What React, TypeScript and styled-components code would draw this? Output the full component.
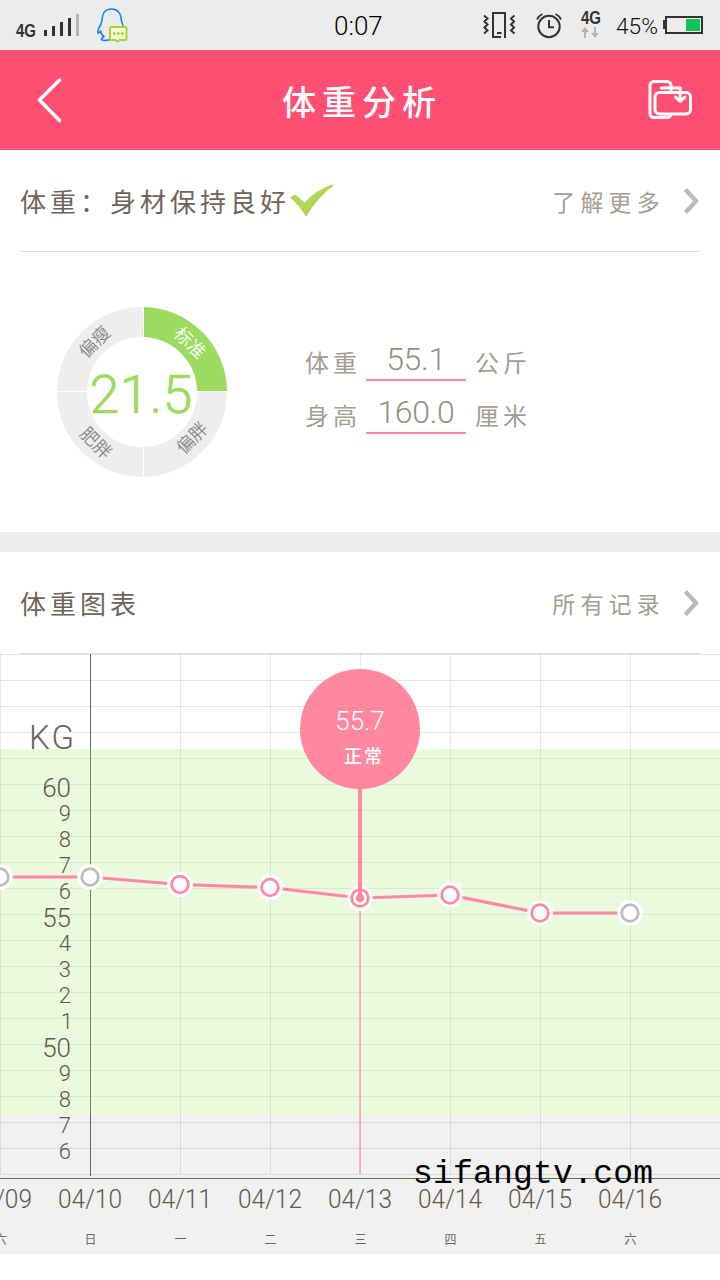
import React from 'react';
import styled, { createGlobalStyle } from 'styled-components';

const latin = `Roboto, "Liberation Sans", sans-serif`;
const cjk = `"Noto Sans CJK SC", sans-serif`;
const brown = '#6f6457';
const rose = '#ff879f';

const GlobalStyle = createGlobalStyle`
  * { box-sizing: border-box; }
  body { margin: 0; background: #fff; }
  svg { display: block; flex: none; }
`;

const Screen = styled.div`
  width: 720px;
  height: 1280px;
  overflow: hidden;
  display: flex;
  flex-direction: column;
  background: #fff;
  font-family: ${cjk};
`;

const StatusBar = styled.div`
  height: 50px;
  flex: none;
  display: grid;
  grid-template-columns: 334px 1fr 240px;
  background: #ececec;
`;

const Clock = styled.div`
  font: 300 26px/52px ${latin};
  color: #000;
`;

const Header = styled.header`
  height: 100px;
  flex: none;
  display: flex;
  align-items: center;
  padding: 0 27px 0 36px;
  background: #ff5073;
`;

const Title = styled.h1`
  flex: 1;
  margin: 0;
  padding: 2px 0 0 219px;
  font: 500 34px/50px ${cjk};
  letter-spacing: 6px;
  color: #fff;
`;

const SectionRow = styled.div`
  height: 102px;
  flex: none;
  margin: 0 20px;
  display: flex;
  align-items: center;
  border-bottom: 1px solid #dedede;
`;

const SectionTitle = styled.div`
  flex: 1;
  display: flex;
  align-items: center;
  font: 400 26px/40px ${cjk};
  letter-spacing: 4px;
  color: ${brown};
`;

const MoreLink = styled.div`
  display: flex;
  align-items: center;
  gap: 17px;
  font: 400 23px/40px ${cjk};
  letter-spacing: 5.200px;
  color: #a39d94;
`;

const Summary = styled.section`
  height: 280px;
  flex: none;
  display: flex;
  gap: 77px;
  padding: 55px 0 0 57px;
`;

const Fields = styled.div`
  padding-top: 21px;
`;

const Field = styled.div`
  height: 53px;
  display: grid;
  grid-template-columns: 62px 100px auto;
  align-items: end;
`;

const FieldText = styled.span<{ $unit?: boolean }>`
  padding: 0 0 3px ${(p) => (p.$unit ? 9 : 1)}px;
  font: 400 24px/32px ${cjk};
  letter-spacing: 4px;
  color: #a39d94;
`;

const FieldValue = styled.span`
  height: 45px;
  border-bottom: 2px solid ${rose};
  text-align: center;
  font: 300 32px/47px ${latin};
  letter-spacing: -0.3px;
  color: #968f85;
`;

const Divider = styled.div`
  height: 20px;
  flex: none;
  background: #eee;
`;

const StatusLeft = () => (
  <svg width="334" height="50" fill="none">
    <text x="16" y="37" textLength="20" lengthAdjust="spacingAndGlyphs" fontFamily="Liberation Sans" fontWeight="700" fontSize="18" fill="#333">4G</text>
    <path d="M45.5 30v6M53.5 26v10M61.5 22v14M69.5 18v18" stroke="#333" strokeWidth="3" />
    <path d="M77.5 14v22" stroke="#b5b5b5" strokeWidth="3" />
    <path d="M123 26.500C123 24 122 22.500 121.500 21C121 13 118 9 111.500 9C105 9 102 14 102 20C101.500 22 101.500 23.500 100.500 25C98 29 97.500 31 98 33C98.500 33.500 99.500 32.500 100.500 31C101 34 102.500 35.500 104 36.500C101.500 38 100.500 39.500 102.500 40C105 41 108 40.500 111 39" stroke="#1685fa" strokeWidth="1.6" strokeLinejoin="round" />
    <path d="M111.500 27h13.500a1.500 1.500 0 0 1 1.500 1.500v10a1.500 1.500 0 0 1-1.500 1.500h-5.500l-2 1.500-2-1.500h-4a1.500 1.500 0 0 1-1.500-1.500v-10a1.500 1.500 0 0 1 1.500-1.500z" fill="#f3f8e0" stroke="#a7d629" strokeWidth="2" />
    <path d="M113 33.500h2.500M117 33.500h2.500M121 33.500h2.500" stroke="#a7d629" strokeWidth="2.400" />
  </svg>
);

const StatusRight = () => (
  <svg width="240" height="50" viewBox="480 0 240 50" fill="none" stroke="#333" strokeWidth="2">
    <path d="M501 36.900H493V13H505V38M497 33h4.500" />
    <path d="M484 15.500l3.500 3-3 3 3 3-3 3 3 3-3.500 3M514.500 15.500l-3.500 3 3 3-3 3 3 3-3 3 3.500 3" strokeWidth="2" />
    <circle cx="549" cy="26.500" r="10.700" />
    <path d="M549 20v7.300h5" />
    <path d="M537 19.500q2-4 5.500-5.500M561 19.500q-2-4-5.500-5.500" strokeWidth="1.700" />
    <text x="581" y="24" textLength="20" lengthAdjust="spacingAndGlyphs" fontFamily="Liberation Sans" fontWeight="700" fontSize="18" fill="#333" stroke="none">4G</text>
    <path d="M585 38v-7M595 27v7" stroke="#b3b3b3" />
    <path d="M581 32l4-5 4 5zM591 33l4 5 4-5z" fill="#b3b3b3" stroke="none" />
    <text x="616" y="34" textLength="42" lengthAdjust="spacingAndGlyphs" fontFamily={latin} fontWeight="300" fontSize="22.500" fill="#111" stroke="none">45%</text>
    <rect x="666" y="17" width="36" height="16" />
    <path d="M664.500 20v9" strokeWidth="3" />
    <rect x="686" y="19" width="14" height="12" fill="#12c25b" stroke="none" />
  </svg>
);

const BackIcon = () => (
  <svg width="27" height="46" fill="none" stroke="#fff" strokeWidth="3.500" strokeLinecap="round" strokeLinejoin="round">
    <path d="M23.500 3L3.500 23L23.500 43.500" />
  </svg>
);

const FolderIcon = () => (
  <svg width="46" height="42" viewBox="647 79 46 42" fill="none" stroke="#fff" strokeWidth="3" strokeLinecap="round" strokeLinejoin="round">
    <path d="M671 91V85.500a4 4 0 0 0-4-4H654a4 4 0 0 0-4 4v28a4 4 0 0 0 4 4h13a4.500 4.500 0 0 0 4-3" />
    <rect x="655" y="92.500" width="35.500" height="21.500" rx="4.500" />
    <path d="M661.500 88h18.700v13M675.500 97l4.700 4.500 4.700-4.500" />
  </svg>
);

const Chevron = () => (
  <svg width="18" height="26" fill="none" stroke="#bdb9b9" strokeWidth="4.300">
    <path d="M3.500 1.500L14 13L3.500 24.500" strokeLinejoin="miter" />
  </svg>
);

const CheckMark = styled.svg`
  margin: -2px 0 0 -1px;
`;

const Check = () => (
  <CheckMark width="44" height="34">
    <path d="M1 14.500L6 11.500Q11 15 15.500 19.500Q27 7 44 1L43.500 3.500Q30 13 17.500 33L16.500 33Q10 22 1 14.500Z" fill="#aed855" />
  </CheckMark>
);

const segments = [
  { label: '偏瘦', x: 37.5, y: 35, angle: -45, fill: '#888' },
  { label: '标准', x: 133, y: 36, angle: 45, fill: '#fff' },
  { label: '肥胖', x: 39, y: 136, angle: 45, fill: '#888' },
  { label: '偏胖', x: 135, y: 131, angle: -45, fill: '#888' },
];

const Donut = () => (
  <svg width="170" height="170">
    <circle cx="85" cy="85" r="70" fill="none" stroke="#eee" strokeWidth="30" />
    <path d="M86 15A70 70 0 0 1 155 84.500" fill="none" stroke="#9bdc60" strokeWidth="30" />
    <path d="M86.500 0v32M86.500 138v32M0 84.500h32M138 84.500h32" stroke="#fff" />
    {segments.map((s) => (
      <text key={s.label} transform={`translate(${s.x} ${s.y}) rotate(${s.angle})`} y="6.500" textAnchor="middle" fontFamily="Noto Sans CJK SC" fontWeight="350" fontSize="18" fill={s.fill}>{s.label}</text>
    ))}
    <text x="84" y="106" textAnchor="middle" fontFamily={latin} fontWeight="300" fontSize="54" fill="#9bdc60" stroke="#9bdc60" strokeWidth="0.700">21.5</text>
  </svg>
);

const gridRows = Array.from({ length: 21 }, (_, i) => i * 26 + 0.5);
const gridCols = [0, 180, 270, 360, 450, 540, 630];
const scale = ['60', '9', '8', '7', '6', '55', '4', '3', '2', '1', '50', '9', '8', '7', '6'];
const points = [
  { x: 0, y: 223, date: '04/09', day: '六', muted: true },
  { x: 90, y: 223, date: '04/10', day: '日', muted: true },
  { x: 180, y: 230.5, date: '04/11', day: '一' },
  { x: 270, y: 233.5, date: '04/12', day: '二' },
  { x: 360, y: 244, date: '04/13', day: '三' },
  { x: 450, y: 241, date: '04/14', day: '四' },
  { x: 540, y: 259, date: '04/15', day: '五' },
  { x: 630, y: 259, date: '04/16', day: '六', muted: true },
];

const WeightChart = () => (
  <svg width="720" height="600" fontFamily={latin} fontWeight="300">
    <rect y="461" width="720" height="139" fill="#f1f1f1" />
    <g stroke="#000" strokeOpacity="0.09">
      {gridRows.map((y) => <path key={y} d={`M0 ${y}H720`} />)}
      {gridCols.map((x) => <path key={x} d={`M${x + 0.5} 0V520`} />)}
    </g>
    <path d="M90.500 0V522" stroke={brown} />
    <rect y="95" width="720" height="366" fill="#9be764" fillOpacity="0.22" />
    <path d="M0 524.500H720" stroke={brown} />
    <text x="29" y="95" fontSize="33" fill={brown} textLength="45">KG</text>
    {scale.map((label, i) => (
      <text key={i} x={label === '1' ? 73 : 71} y={(label.length > 1 ? 143 : 141) + i * 26} textAnchor="end" fontSize={label.length > 1 ? 26 : 22} fill="#62574a">{label}</text>
    ))}
    <path d="M360 244V520" stroke={rose} strokeWidth="2" strokeOpacity="0.6" />
    <polyline points={points.map((p) => `${p.x},${p.y}`).join(' ')} fill="none" stroke={rose} strokeWidth="3.200" />
    {points.map((p) => (
      <g key={p.x}>
        <circle cx={p.x} cy={p.y} r="12.800" fill="#fff" />
        <circle cx={p.x} cy={p.y} r="8.300" fill="#fff" stroke={p.muted ? '#bdbdbd' : rose} strokeWidth="2.800" />
        <text x={p.x} y="554" textAnchor="middle" fontSize="26" textLength="64" lengthAdjust="spacingAndGlyphs" fill="#62574a">{p.date}</text>
        <text x={p.x + 0.5} y="589.500" textAnchor="middle" fontFamily="Noto Sans CJK SC" fontWeight="400" fontSize="12" fill={brown}>{p.day}</text>
      </g>
    ))}
    <path d="M360 130V244" stroke={rose} strokeWidth="4" />
    <circle cx="360" cy="244" r="4.300" fill={rose} />
    <circle cx="360" cy="75" r="60" fill={rose} />
    <text x="360" y="76" textAnchor="middle" fontSize="26" fill="#fff">55.7</text>
    <text x="344" y="109" fontFamily="Noto Sans CJK SC" fontWeight="500" fontSize="18" letterSpacing="2" fill="#fff">正常</text>
    <text x="413" y="529" fontFamily="Liberation Mono" fontWeight="400" fontSize="33" textLength="240" fill="#000">sifangtv.com</text>
  </svg>
);

export default function App() {
  return (
    <Screen>
      <GlobalStyle />
      <StatusBar>
        <StatusLeft />
        <Clock>0:07</Clock>
        <StatusRight />
      </StatusBar>
      <Header>
        <BackIcon />
        <Title>体重分析</Title>
        <FolderIcon />
      </Header>
      <SectionRow>
        <SectionTitle>体重：身材保持良好<Check /></SectionTitle>
        <MoreLink>了解更多<Chevron /></MoreLink>
      </SectionRow>
      <Summary>
        <Donut />
        <Fields>
          <Field>
            <FieldText>体重</FieldText>
            <FieldValue>55.1</FieldValue>
            <FieldText $unit>公斤</FieldText>
          </Field>
          <Field>
            <FieldText>身高</FieldText>
            <FieldValue>160.0</FieldValue>
            <FieldText $unit>厘米</FieldText>
          </Field>
        </Fields>
      </Summary>
      <Divider />
      <SectionRow>
        <SectionTitle>体重图表</SectionTitle>
        <MoreLink>所有记录<Chevron /></MoreLink>
      </SectionRow>
      <WeightChart />
    </Screen>
  );
}
